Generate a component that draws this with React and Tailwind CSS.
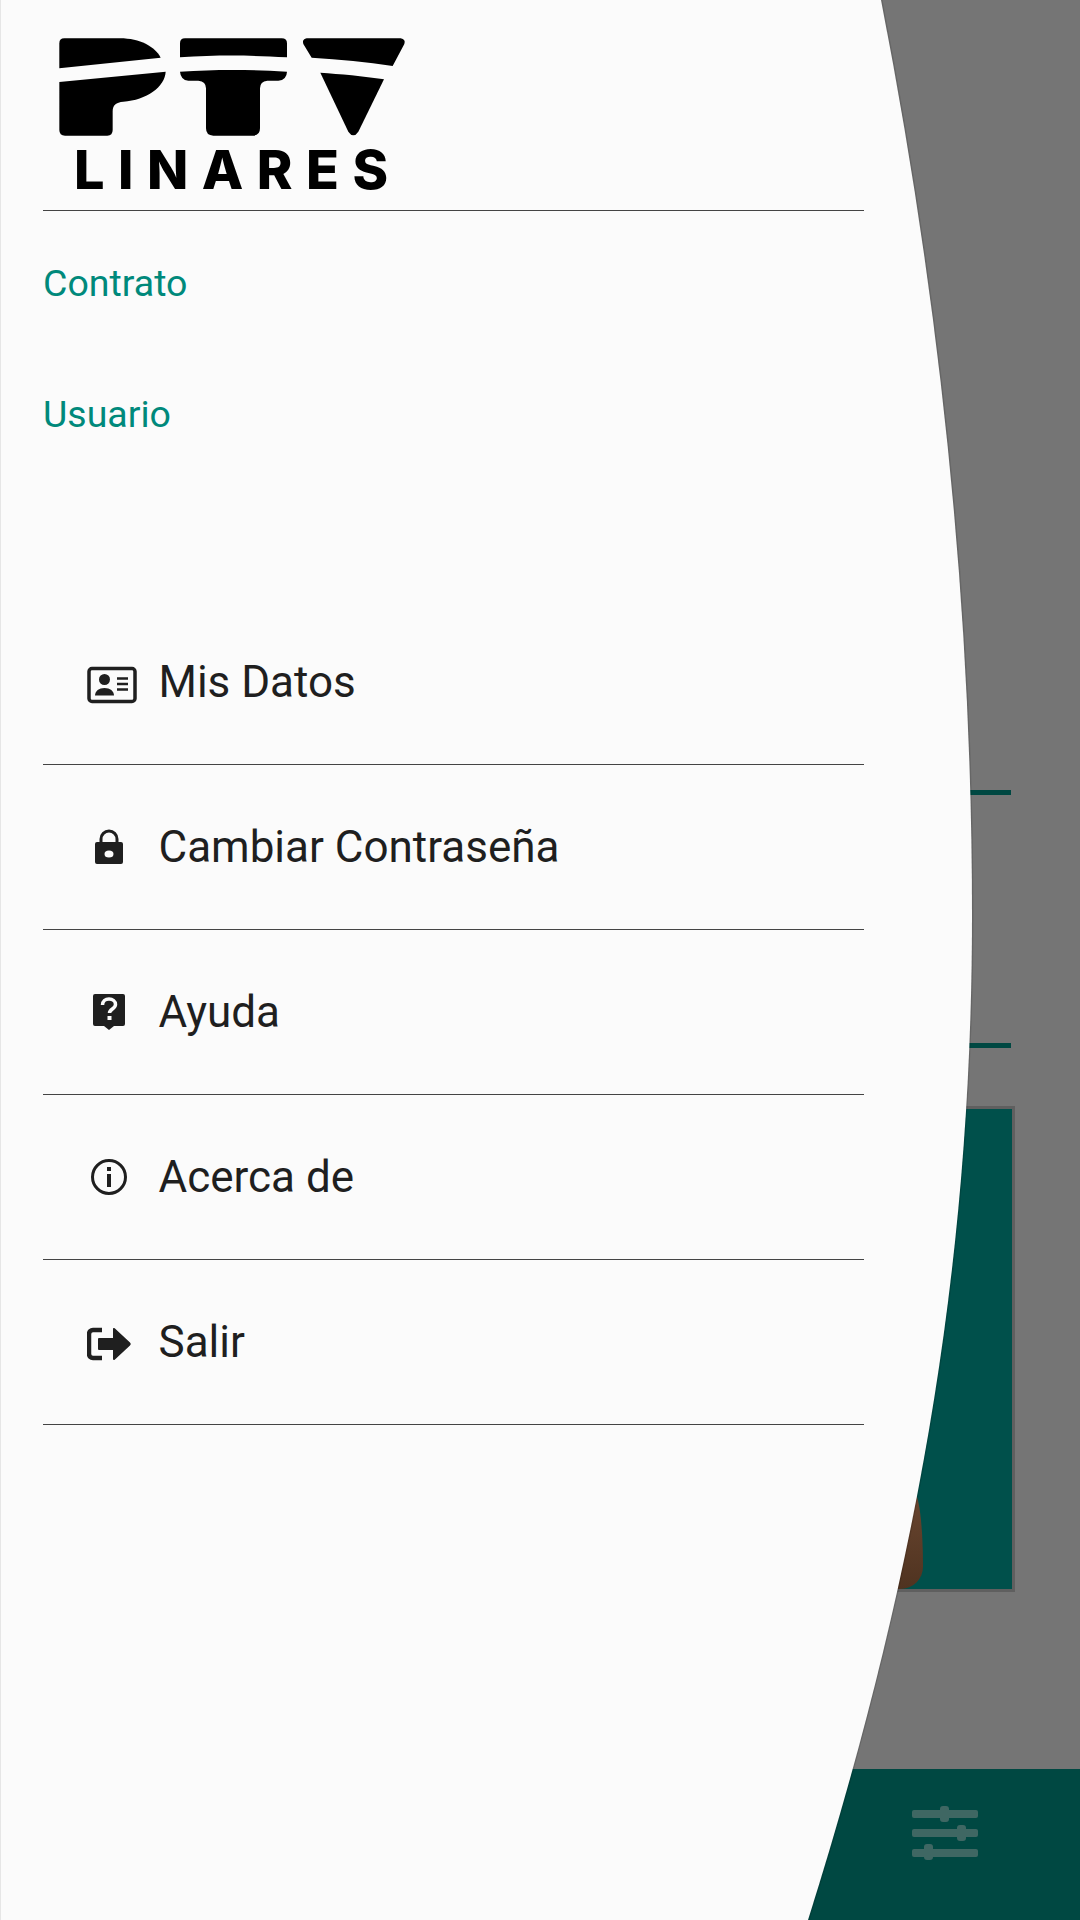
import React from 'react'

const font = { fontFamily: 'Roboto, sans-serif' }

const IdCard = () => (
  <svg width="50" height="38" viewBox="0 0 50 38" className="ml-[5px] mt-[5px] text-[#1f1f1f]">
    <rect x="2" y="2.500" width="46" height="33" rx="3" fill="none" stroke="currentColor" strokeWidth="3.500" />
    <circle cx="17.500" cy="13.500" r="5.500" fill="currentColor" />
    <path d="M8 29.500c0-4.500 4-7.500 9.500-7.500s9.500 3 9.500 7.500z" fill="currentColor" />
    <path d="M30 12.500h11M30 18h11M30 23.500h11" stroke="currentColor" strokeWidth="2.500" />
  </svg>
)

const Lock = () => (
  <svg width="30" height="36" viewBox="0 0 30 36" className="text-[#1f1f1f]">
    <path d="M7 16v-6a8 8 0 0 1 16 0v6" fill="none" stroke="currentColor" strokeWidth="3" />
    <path fillRule="evenodd" d="M3 13h24a2 2 0 0 1 2 2v18a2 2 0 0 1-2 2H3a2 2 0 0 1-2-2V15a2 2 0 0 1 2-2zm12 8.500a4.500 3.500 0 1 0 0 7a4.500 3.500 0 1 0 0-7z" fill="currentColor" />
  </svg>
)

const Help = () => (
  <svg width="34" height="38" viewBox="0 0 34 38" className="text-[#1f1f1f]">
    <path d="M3 1h28a2 2 0 0 1 2 2v28a2 2 0 0 1-2 2h-9l-5 4l-5-4H3a2 2 0 0 1-2-2V3a2 2 0 0 1 2-2z" fill="currentColor" />
    <path d="M10.500 12c0-3.800 2.900-6 6.500-6s6.500 2.200 6.500 5.500c0 4.500-6 4.500-6 8.500" fill="none" stroke="#fbfbfb" strokeWidth="3.500" />
    <rect x="15.500" y="23" width="4" height="4" fill="#fbfbfb" />
  </svg>
)

const Info = () => (
  <svg width="38" height="38" viewBox="0 0 38 38" className="text-[#1f1f1f]">
    <circle cx="19" cy="19" r="16.500" fill="none" stroke="currentColor" strokeWidth="3" />
    <rect x="17" y="9" width="4" height="4" fill="currentColor" />
    <rect x="17" y="16" width="4" height="13" fill="currentColor" />
  </svg>
)

const Exit = () => (
  <svg width="46" height="34" viewBox="0 0 46 34" className="ml-[2px] mt-[4px] text-[#1f1f1f]">
    <path d="M15 3H6a4 4 0 0 0-4 4v20a4 4 0 0 0 4 4h9" fill="none" stroke="currentColor" strokeWidth="4.500" />
    <path d="M12 11h14V2a1 1 0 0 1 1.700-.7L43 15.500a2 2 0 0 1 0 3L27.700 32.700A1 1 0 0 1 26 32v-9H12a1 1 0 0 1-1-1V12a1 1 0 0 1 1-1z" fill="currentColor" />
  </svg>
)

const Sliders = () => (
  <svg width="66" height="54" viewBox="0 0 66 54" fill="#3f6763">
    <rect x="0" y="4" width="66" height="8" rx="2" />
    <rect x="28" y="0" width="9" height="16" rx="3" />
    <rect x="0" y="23" width="66" height="8" rx="2" />
    <rect x="45" y="19" width="9" height="16" rx="3" />
    <rect x="0" y="43" width="66" height="8" rx="2" />
    <rect x="12" y="38" width="9" height="16" rx="3" />
  </svg>
)

const Logo = () => (
  <div className="flex flex-col items-start">
    <svg width="400" height="120" viewBox="0 0 1200 360" fill="#000">
      {/* P */}
      <path d="M88 70Q88 55 103 55H270C330 55 375 80 392 113L88 145Z" />
      <path d="M88 186L407 155C405 200 350 240 280 245C258 247 248 255 248 275V330Q248 347 232 347H105Q88 347 88 330Z" />
      {/* T */}
      <path d="M450 70Q450 55 465 55H755Q771 55 771 70V112C650 105 560 105 450 112Z" />
      <path d="M450 155C560 148 650 148 771 155Q770 180 745 182H712Q690 184 690 205V325Q690 347 668 347H550Q528 347 528 325V205Q528 184 505 182H475Q452 180 450 155Z" />
      {/* V */}
      <path d="M830 55H1112Q1128 58 1123 72L1088 138C1010 125 930 118 845 113L820 72Q815 58 830 55Z" />
      <path d="M871 158C930 162 1000 168 1062 178L985 335Q970 357 955 335Z" />
    </svg>
    <div
      className="ml-[44px] mt-[6px] text-[54px] leading-[48px] font-extrabold tracking-[13.500px] text-black whitespace-nowrap"
      style={{ fontFamily: 'Inter, sans-serif' }}
    >
      LINARES
    </div>
  </div>
)

const items = [
  { label: 'Mis Datos', icon: <IdCard /> },
  { label: 'Cambiar Contraseña', icon: <Lock /> },
  { label: 'Ayuda', icon: <Help /> },
  { label: 'Acerca de', icon: <Info /> },
  { label: 'Salir', icon: <Exit /> },
]

export default function App() {
  return (
    <div className="relative w-[1080px] h-[1920px] overflow-hidden bg-[#757575]" style={font}>
      {/* page behind the drawer */}
      <div className="flex flex-col h-full">
        <div className="flex flex-col items-end flex-1 pr-[69px] pt-[790px]">
          <div className="w-[200px] h-[5px] bg-[#004842]" />
          <div className="w-[200px] h-[5px] bg-[#004842] mt-[248px]" />
          <div className="relative w-[300px] h-[486px] mt-[58px] -mr-[4px] bg-[#00504b] border-[3px] border-[#5f5f5f]">
            <div className="absolute left-0 bottom-0 w-[205px] h-[97px] bg-gradient-to-b from-[#6a4630] to-[#4f3320] rounded-br-[24px] rounded-tr-[10px_80px]" />
          </div>
        </div>
        <div className="flex justify-end items-center h-[151px] bg-[#004842] pr-[102px] pb-[24px]">
          <Sliders />
        </div>
      </div>

      {/* curved drawer */}
      <svg className="absolute inset-0" width="1080" height="1920" viewBox="0 0 1080 1920">
        <path
          d="M0 0H881C940.500 305 972 610 972 915C972 1270 915 1580 808 1920H0Z"
          fill="#fbfbfb"
          stroke="#000"
          strokeOpacity="0.12"
          strokeWidth="3"
          paintOrder="stroke"
        />
      </svg>

      <div className="absolute left-0 top-0 h-full w-[864px] pl-[42px] border-l border-[#e6e6e6]">
        <div className="h-[211px] border-b-[1.500px] border-[#444444]">
          <div className="-ml-[13px] pt-[20px]">
            <Logo />
          </div>
        </div>
        <div className="flex flex-col text-[#00897b] text-[37.500px] leading-[40px]">
          <div className="mt-[52px]">Contrato</div>
          <div className="mt-[91px]">Usuario</div>
        </div>
        <div className="mt-[166px] flex flex-col">
          {items.map((item) => (
            <div key={item.label} className="flex items-center h-[165px] border-b-[1.500px] border-[#444444]">
              <div className="flex justify-center w-[66px] ml-[33px]">{item.icon}</div>
              <span className="ml-[16.500px] text-[44px] text-[#1f1f1f]">{item.label}</span>
            </div>
          ))}
        </div>
      </div>
    </div>
  )
}
